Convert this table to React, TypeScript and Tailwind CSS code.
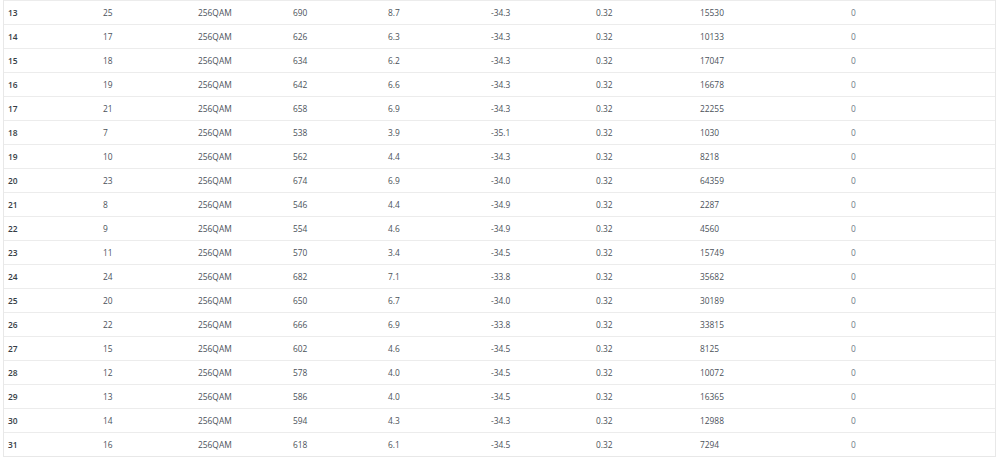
import React from "react";

const rows: string[][] = [
  ["13", "25", "256QAM", "690", "8.7", "-34.3", "0.32", "15530", "0"],
  ["14", "17", "256QAM", "626", "6.3", "-34.3", "0.32", "10133", "0"],
  ["15", "18", "256QAM", "634", "6.2", "-34.3", "0.32", "17047", "0"],
  ["16", "19", "256QAM", "642", "6.6", "-34.3", "0.32", "16678", "0"],
  ["17", "21", "256QAM", "658", "6.9", "-34.3", "0.32", "22255", "0"],
  ["18", "7", "256QAM", "538", "3.9", "-35.1", "0.32", "1030", "0"],
  ["19", "10", "256QAM", "562", "4.4", "-34.3", "0.32", "8218", "0"],
  ["20", "23", "256QAM", "674", "6.9", "-34.0", "0.32", "64359", "0"],
  ["21", "8", "256QAM", "546", "4.4", "-34.9", "0.32", "2287", "0"],
  ["22", "9", "256QAM", "554", "4.6", "-34.9", "0.32", "4560", "0"],
  ["23", "11", "256QAM", "570", "3.4", "-34.5", "0.32", "15749", "0"],
  ["24", "24", "256QAM", "682", "7.1", "-33.8", "0.32", "35682", "0"],
  ["25", "20", "256QAM", "650", "6.7", "-34.0", "0.32", "30189", "0"],
  ["26", "22", "256QAM", "666", "6.9", "-33.8", "0.32", "33815", "0"],
  ["27", "15", "256QAM", "602", "4.6", "-34.5", "0.32", "8125", "0"],
  ["28", "12", "256QAM", "578", "4.0", "-34.5", "0.32", "10072", "0"],
  ["29", "13", "256QAM", "586", "4.0", "-34.5", "0.32", "16365", "0"],
  ["30", "14", "256QAM", "594", "4.3", "-34.3", "0.32", "12988", "0"],
  ["31", "16", "256QAM", "618", "6.1", "-34.5", "0.32", "7294", "0"],
];

export default function App() {
  return (
    <div
      className="w-[999px] h-[457px] bg-white overflow-hidden"
      style={{ fontFamily: '"Open Sans", "Noto Sans", sans-serif' }}
    >
      <div className="ml-[3px] w-[993px] border-l border-r border-[#e8e8e8] border-b">
        {rows.map((r, i) => (
          <div
            key={i}
            className="grid grid-cols-[95px_95px_95px_95px_103px_105px_104px_151px_1fr] h-[24px] pt-[1px] border-t border-[#ececec] items-center text-[8.4px] text-[#4b525a]"
          >
            {r.map((c, j) => (
              <div
                key={j}
                className={
                  j === 0
                    ? "pl-[4px] font-semibold text-[#363d45]"
                    : j === 8
                    ? "pl-[4px] text-[#6e7986]"
                    : "pl-[4px]"
                }
              >
                {c}
              </div>
            ))}
          </div>
        ))}
      </div>
    </div>
  );
}
